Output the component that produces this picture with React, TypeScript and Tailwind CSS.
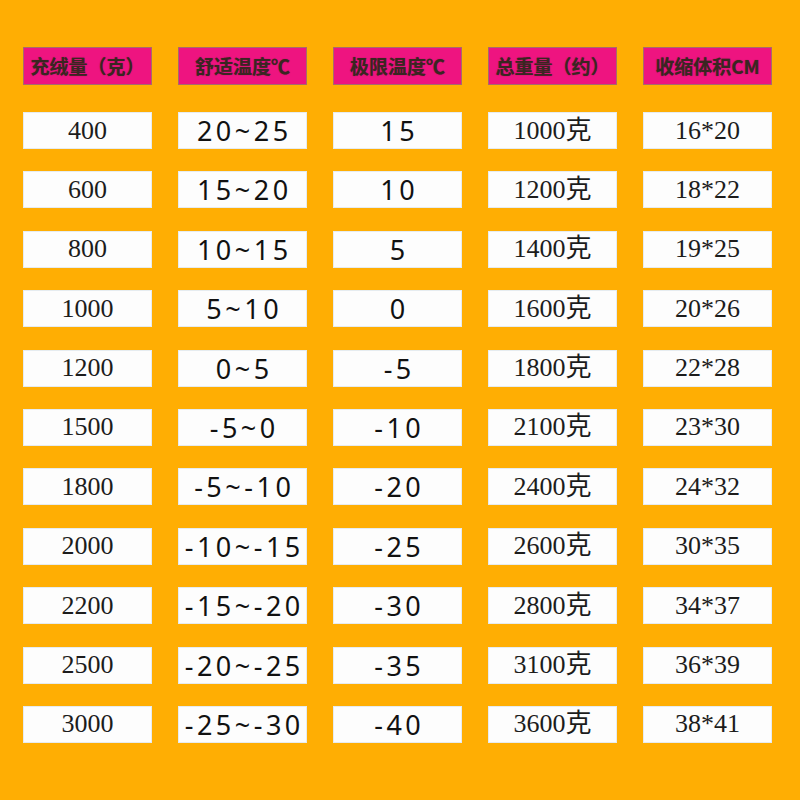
import React from "react";

const headers = ["充绒量（克）", "舒适温度℃", "极限温度℃", "总重量（约）", "收缩体积CM"];

const rows: string[][] = [
  ["400", "20~25", "15", "1000克", "16*20"],
  ["600", "15~20", "10", "1200克", "18*22"],
  ["800", "10~15", "5", "1400克", "19*25"],
  ["1000", "5~10", "0", "1600克", "20*26"],
  ["1200", "0~5", "-5", "1800克", "22*28"],
  ["1500", "-5~0", "-10", "2100克", "23*30"],
  ["1800", "-5~-10", "-20", "2400克", "24*32"],
  ["2000", "-10~-15", "-25", "2600克", "30*35"],
  ["2200", "-15~-20", "-30", "2800克", "34*37"],
  ["2500", "-20~-25", "-35", "3100克", "36*39"],
  ["3000", "-25~-30", "-40", "3600克", "38*41"],
];

const serif = "font-['Liberation_Serif','Noto_Sans_CJK_SC',serif] text-[26px] text-[#1c1c1c]";
const sans = "font-['Noto_Sans','Noto_Sans_CJK_SC',sans-serif] text-[27px] tracking-[3.5px] text-[#111]";

export default function App() {
  return (
    <div className="w-[800px] h-[800px] bg-[#ffae03] pl-[23px] pt-[47px] overflow-hidden">
      <div className="grid grid-cols-[repeat(5,129px)] gap-x-[26px]">
        {headers.map((h) => (
          <div
            key={h}
            className="h-[38px] bg-[#ee1480] border border-[#a86a6a] flex items-center justify-center font-['Noto_Sans_CJK_SC',sans-serif] font-bold text-[19px] text-[#3a2622] [text-shadow:0_0_1px_rgba(60,30,30,0.6)] whitespace-nowrap"
          >
            {h}
          </div>
        ))}
      </div>
      <div className="mt-[27px] grid grid-cols-[repeat(5,129px)] gap-x-[26px] gap-y-[22.4px]">
        {rows.map((r, i) =>
          r.map((c, j) => (
            <div
              key={i + "-" + j}
              className={
                "h-[37px] bg-[#fdfdfd] border border-[#e6ecf0] flex items-center justify-center leading-none whitespace-nowrap " +
                (j === 1 || j === 2 ? sans : serif)
              }
            >
              <span className={j === 1 || j === 2 ? "pl-[3.5px]" : ""}>{c}</span>
            </div>
          ))
        )}
      </div>
    </div>
  );
}
